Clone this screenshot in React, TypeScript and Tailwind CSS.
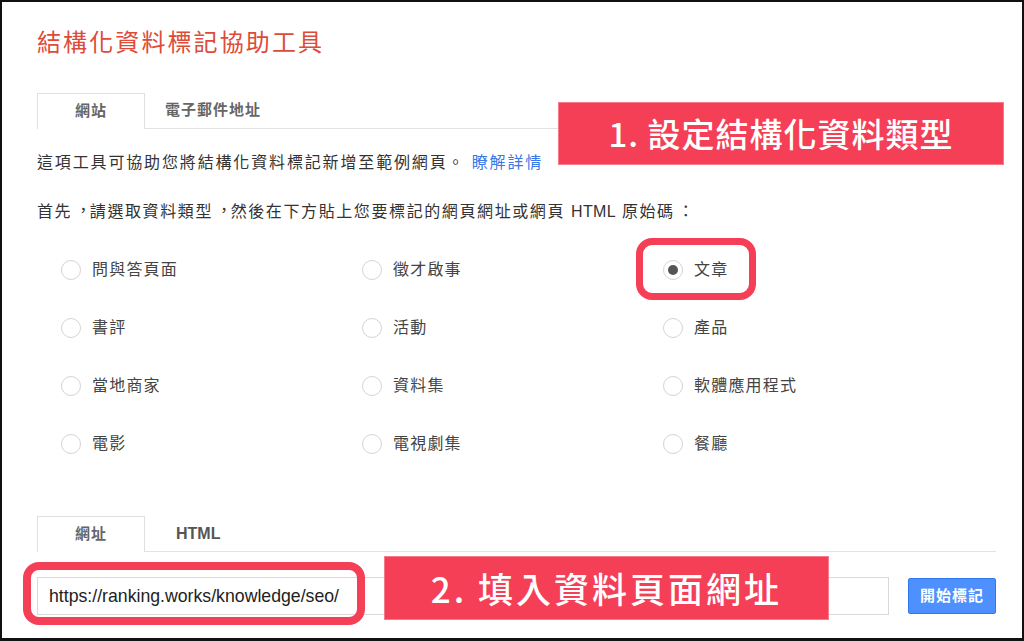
const cjk = { fontFamily: '"Liberation Sans", "Noto Sans CJK TC", sans-serif' }
const cjkFirst = { fontFamily: '"Noto Sans CJK TC", sans-serif' }

const rows = [
  ['問與答頁面', '徵才啟事', '文章'],
  ['書評', '活動', '產品'],
  ['當地商家', '資料集', '軟體應用程式'],
  ['電影', '電視劇集', '餐廳'],
]

function Comma() {
  return <span className="inline-block translate-x-[3px] -translate-y-[1px]">，</span>
}

function Radio({ label, checked }: { label: string; checked?: boolean }) {
  return (
    <div className="relative flex h-[58px] items-center gap-[11px]">
      <span className="flex h-[20px] w-[20px] items-center justify-center rounded-full border border-[#d4d4d4] bg-white">
        {checked && <span className="h-[10px] w-[10px] rounded-full bg-[#555]" />}
      </span>
      <span className="text-[16px] tracking-[1.2px] text-[#444]">{label}</span>
      {checked && (
        <div className="absolute left-[-27px] top-[-3px] h-[62px] w-[120px] rounded-[16px] border-[7px] border-[#f43f57]" />
      )}
    </div>
  )
}

function TabBar({ active, other, otherLatin }: { active: string; other: string; otherLatin?: boolean }) {
  return (
    <div className="flex items-end border-b border-[#e3e3e3]">
      <div className="-mb-px flex h-[36px] w-[108px] items-center justify-center border border-b-0 border-[#e0e0e0] bg-white text-[15px] font-bold tracking-[1px] text-[#666]">
        {active}
      </div>
      <div
        className={
          otherLatin
            ? 'flex h-[35px] items-center pl-[31px] text-[16px] font-bold text-[#555]'
            : 'flex h-[35px] items-center pl-[20px] text-[15px] font-bold tracking-[1px] text-[#666]'
        }
      >
        {other}
      </div>
    </div>
  )
}

export default function App() {
  return (
    <div
      lang="zh-Hant-TW"
      className="relative h-[641px] w-[1024px] overflow-hidden border-2 border-b-[3px] border-[#111] bg-white"
      style={cjk}
    >
      <div className="pl-[35px] pr-[26px]">
        <h1 className="mt-[23px] h-[36px] text-[24px] leading-[36px] tracking-[2.1px] text-[#dd4b39]">
          結構化資料標記協助工具
        </h1>

        <div className="mt-[32px]">
          <TabBar active="網站" other="電子郵件地址" />
        </div>

        <p className="mt-[22px] h-[24px] text-[16px] leading-[24px] tracking-[1.85px] text-[#333]">
          這項工具可協助您將結構化資料標記新增至範例網頁。{' '}
          <span className="text-[#3b78e7]">瞭解詳情</span>
        </p>
        <p className="mt-[25px] h-[24px] text-[16px] leading-[24px] tracking-[1.6px] text-[#333]">
          首先<Comma />請選取資料類型<Comma />然後在下方貼上您要標記的網頁網址或網頁{' '}
          <span className="tracking-[0.3px]">HTML</span> 原始碼
          <span className="inline-block translate-x-[3px]">：</span>
        </p>

        <div className="mt-[17px] grid grid-cols-[301px_301px_301px] pl-[24px]">
          {rows.flat().map((label) => (
            <Radio key={label} label={label} checked={label === '文章'} />
          ))}
        </div>

        <div className="mt-[43px]">
          <TabBar active="網址" other="HTML" otherLatin />
        </div>

        <div className="mt-[25px] flex items-center gap-[19px]">
          <div className="flex h-[38px] flex-1 items-center border border-[#d9d9d9] pl-[11px] text-[17.7px] text-[#222]">
            https://ranking.works/knowledge/seo/
          </div>
          <button className="h-[36px] w-[88px] rounded-[2px] border border-[#3079ed] bg-[#4d90fe] text-[15px] font-bold tracking-[1px] text-white">
            開始標記
          </button>
        </div>
      </div>

      <div
        className="absolute left-[556px] top-[100px] flex h-[63px] w-[446px] items-center justify-center border border-[#f77a8a] bg-[#f43f57] text-[33px] font-medium tracking-[1px] text-white"
        style={cjkFirst}
      >
        1. 設定結構化資料類型
      </div>

      <div className="absolute left-[21px] top-[560px] h-[63px] w-[342px] rounded-[16px] border-[8px] border-[#f43f57]" />

      <div
        className="absolute left-[382px] top-[554px] flex h-[64px] w-[445px] items-center justify-center border border-[#f77a8a] bg-[#f43f57] text-[35px] font-medium tracking-[3px] text-white"
        style={cjkFirst}
      >
        2. 填入資料頁面網址
      </div>
    </div>
  )
}
